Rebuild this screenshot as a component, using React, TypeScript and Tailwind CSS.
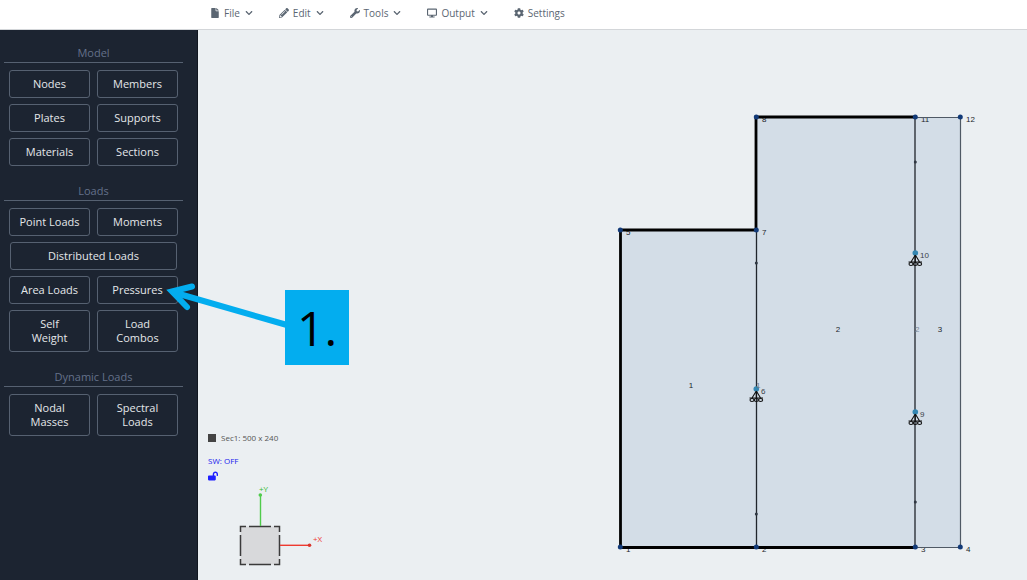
import type { ReactNode } from "react";
import {
  FaChevronDown,
  FaCog,
  FaDesktop,
  FaFile,
  FaLockOpen,
  FaPencilAlt,
  FaWrench,
} from "react-icons/fa";

const menuItems = [
  { label: "File", icon: <FaFile />, dropdown: true },
  { label: "Edit", icon: <FaPencilAlt />, dropdown: true },
  { label: "Tools", icon: <FaWrench />, dropdown: true },
  { label: "Output", icon: <FaDesktop />, dropdown: true },
  { label: "Settings", icon: <FaCog />, dropdown: false },
];

function TopMenu() {
  return (
    <header className="h-[30px] border-b border-[#d3d6d9] bg-white pl-[210px]">
      <nav className="flex h-[25px] items-center gap-[26px]">
        {menuItems.map((item) => (
          <button
            key={item.label}
            className="flex items-center gap-1 text-[10px] leading-4 text-[#5b6672]"
          >
            {item.icon}
            <span>{item.label}</span>
            {item.dropdown && <FaChevronDown className="ml-px size-2" />}
          </button>
        ))}
      </nav>
    </header>
  );
}

function SideSection({ title, children }: { title: string; children: ReactNode }) {
  return (
    <section>
      <h2 className="border-b border-[#566171] text-center text-[11px] leading-[18px] text-[#64718a]">
        {title}
      </h2>
      <div className="grid grid-cols-2 gap-x-[7px] gap-y-[6px] px-[5px] pt-[7px]">
        {children}
      </div>
    </section>
  );
}

function SideButton({ lines, wide }: { lines: string[]; wide?: boolean }) {
  return (
    <button
      className={`rounded-[3px] border border-[#566171] py-[6px] text-[11px] leading-[14px] text-[#e4e7ea] ${
        wide ? "col-span-2 mx-px" : ""
      }`}
    >
      {lines.map((line) => (
        <span key={line} className="block">
          {line}
        </span>
      ))}
    </button>
  );
}

function Sidebar() {
  return (
    <aside className="flex w-[198px] shrink-0 flex-col gap-4 border-r border-[#10161f] bg-[#1c2431] pl-1 pr-[14px] pt-[14px]">
      <SideSection title="Model">
        <SideButton lines={["Nodes"]} />
        <SideButton lines={["Members"]} />
        <SideButton lines={["Plates"]} />
        <SideButton lines={["Supports"]} />
        <SideButton lines={["Materials"]} />
        <SideButton lines={["Sections"]} />
      </SideSection>
      <SideSection title="Loads">
        <SideButton lines={["Point Loads"]} />
        <SideButton lines={["Moments"]} />
        <SideButton lines={["Distributed Loads"]} wide />
        <SideButton lines={["Area Loads"]} />
        <SideButton lines={["Pressures"]} />
        <SideButton lines={["Self", "Weight"]} />
        <SideButton lines={["Load", "Combos"]} />
      </SideSection>
      <SideSection title="Dynamic Loads">
        <SideButton lines={["Nodal", "Masses"]} />
        <SideButton lines={["Spectral", "Loads"]} />
      </SideSection>
    </aside>
  );
}

const nodes = [
  { id: 1, x: 620, y: 547 },
  { id: 2, x: 756, y: 547 },
  { id: 3, x: 915, y: 547 },
  { id: 4, x: 960, y: 547 },
  { id: 5, x: 620, y: 230 },
  { id: 7, x: 756, y: 230 },
  { id: 8, x: 756, y: 117 },
  { id: 11, x: 915, y: 117 },
  { id: 12, x: 960, y: 117 },
];

const supports = [
  { id: 6, x: 756, y: 389 },
  { id: 9, x: 915, y: 412 },
  { id: 10, x: 915, y: 253 },
];

const memberDots = [
  { x: 756, y: 263 },
  { x: 756, y: 514 },
  { x: 915, y: 162 },
  { x: 915, y: 502 },
];

const plateLabels = [
  { id: 1, x: 691, y: 388 },
  { id: 2, x: 838, y: 332 },
  { id: 3, x: 940, y: 332 },
];

function ModelDrawing() {
  return (
    <svg
      className="absolute inset-0 h-full w-full"
      viewBox="198 30 829 550"
      preserveAspectRatio="xMinYMin meet"
      fontFamily="Liberation Sans, sans-serif"
      fontSize="8"
    >
      {/* plates */}
      <path d="M620 230H756V117H960V547H620Z" fill="#d3dde7" />

      {/* node labels sit under the walls */}
      {nodes.map((n) => (
        <text key={n.id} x={n.x + 6} y={n.y + 5} fill="#22262b">
          {n.id}
        </text>
      ))}

      {/* members */}
      <path d="M756.5 230V547M915 117V547" stroke="#20252c" strokeWidth="1.3" fill="none" />
      <path d="M915 117.5H960.5V547.5H915" stroke="#4f5965" strokeWidth="1.2" fill="none" />
      <path
        d="M915 117H756V230H620.5V547.5H915"
        stroke="#000"
        strokeWidth="2.8"
        fill="none"
      />
      {memberDots.map((d) => (
        <circle key={`${d.x}-${d.y}`} cx={d.x + 0.3} cy={d.y} r="1.5" fill="#2f3742" />
      ))}
      {nodes.map((n) => (
        <circle key={n.id} cx={n.x + 0.3} cy={n.y} r="2.5" fill="#123a78" />
      ))}

      {/* roller supports */}
      {supports.map((s) => (
        <g key={s.id} transform={`translate(${s.x} ${s.y})`}>
          <circle r="2.8" cx="0.3" fill="#3487b3" />
          <g stroke="#111" strokeWidth="1.1" fill="none">
            <path d="M0.3 2L-4 9M0.3 2L4.6 9M-6.5 9H7M0.3 2V9" />
            <ellipse cx="-4" cy="11" rx="2" ry="1.5" />
            <ellipse cx="0.3" cy="11" rx="2" ry="1.5" />
            <ellipse cx="4.6" cy="11" rx="2" ry="1.5" />
          </g>
          <text x="5" y="5" fill="#3a4149">
            {s.id}
          </text>
        </g>
      ))}
      <text x="756" y="388" fill="#6d7782">1</text>
      <text x="915" y="332" fill="#7c868f">2</text>

      <g fill="#22262b" textAnchor="middle">
        {plateLabels.map((p) => (
          <text key={p.id} x={p.x} y={p.y}>
            {p.id}
          </text>
        ))}
      </g>
    </svg>
  );
}

function AxisGizmo() {
  return (
    <svg
      className="h-[82px] w-[92px]"
      viewBox="236 484 92 82"
      fontFamily="Open Sans, sans-serif"
      fontSize="8"
    >
      <rect x="240.5" y="526.5" width="39" height="38" fill="#d8d9db" />
      <path
        d="M240.5 532V526.5H246M249 526.5H271M274 526.5H279.5V532M279.5 535V556M279.5 559V564.5H274M271 564.5H249M246 564.5H240.5V559M240.5 556V535"
        stroke="#3b3b3b"
        strokeWidth="1.5"
        fill="none"
      />
      <path d="M260.5 526V495" stroke="#4fcb4c" strokeWidth="1.4" />
      <circle cx="260.3" cy="495" r="1.8" fill="#4fcb4c" />
      <text x="259" y="492" fill="#2fb82c">+Y</text>
      <path d="M280 545.3H310" stroke="#ee3a30" strokeWidth="1.4" />
      <circle cx="309.5" cy="545.3" r="1.8" fill="#d9362d" />
      <text x="313" y="542" fill="#ee3a30">+X</text>
    </svg>
  );
}

function Callout() {
  return (
    <>
      <svg
        className="absolute left-[162px] top-[276px] h-[56px] w-[128px]"
        viewBox="162 276 128 56"
        fill="none"
        stroke="#03adef"
        strokeWidth="6"
        strokeLinecap="round"
      >
        <path d="M287 325L174 292.5" />
        <path d="M192 286.500L172 291.500L187 307" strokeLinejoin="miter" />
      </svg>
      <div className="absolute left-[285px] top-[290px] flex h-[75px] w-[64px] items-center justify-center bg-[#03adef] text-[48px] font-medium leading-none text-black">
        1.
      </div>
    </>
  );
}

export default function App() {
  return (
    <div className="relative flex min-h-screen flex-col bg-[#ebeff2] font-['Open_Sans',sans-serif]">
      <TopMenu />
      <div className="flex flex-1">
        <Sidebar />
        <main className="relative flex flex-1 flex-col justify-end pb-[14px] pl-[10px]">
          <ModelDrawing />
          <div className="relative text-[8px] leading-3">
            <p className="flex items-center gap-[5px] text-[#555]">
              <span className="size-2 bg-[#444]" />
              Sec1: 500 x 240
            </p>
            <p className="mt-[11px] text-[#2020ee]">SW: OFF</p>
            <FaLockOpen className="mt-1 size-[10px] text-[#2020ff]" />
          </div>
          <div className="relative ml-[28px] mt-[3px]">
            <AxisGizmo />
          </div>
        </main>
      </div>
      <Callout />
    </div>
  );
}
